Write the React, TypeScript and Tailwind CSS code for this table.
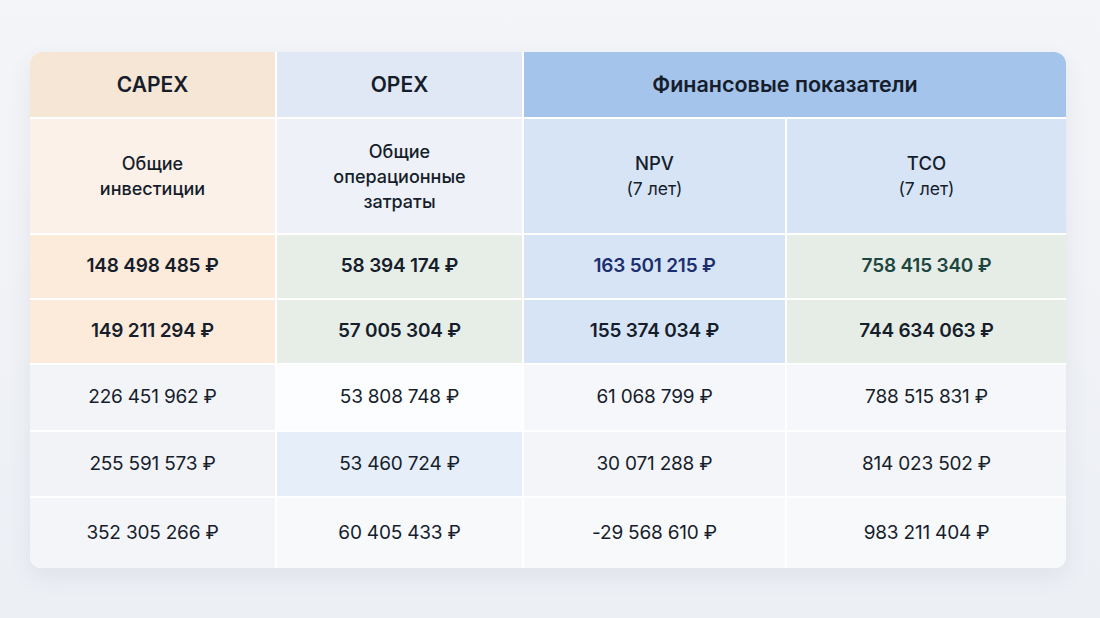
import React from 'react';

type Cell = { text: string; bg: string; tone?: string; bold?: boolean };

const rows: { h: string; cells: Cell[] }[] = [
  {
    h: 'h-[63px]',
    cells: [
      { text: '148 498 485 ₽', bg: 'bg-[#fcebdb]', bold: true },
      { text: '58 394 174 ₽', bg: 'bg-[#e7eee7]', bold: true },
      { text: '163 501 215 ₽', bg: 'bg-[#d7e4f6]', bold: true, tone: 'text-[#1b2f6e]' },
      { text: '758 415 340 ₽', bg: 'bg-[#e6ede6]', bold: true, tone: 'text-[#1d4640]' },
    ],
  },
  {
    h: 'h-[63px]',
    cells: [
      { text: '149 211 294 ₽', bg: 'bg-[#fcebdb]', bold: true },
      { text: '57 005 304 ₽', bg: 'bg-[#e7eee7]', bold: true },
      { text: '155 374 034 ₽', bg: 'bg-[#d7e4f6]', bold: true },
      { text: '744 634 063 ₽', bg: 'bg-[#e6ede6]', bold: true },
    ],
  },
  {
    h: 'h-[65px]',
    cells: [
      { text: '226 451 962 ₽', bg: 'bg-[#f2f4f8]' },
      { text: '53 808 748 ₽', bg: 'bg-[#fcfdfe]' },
      { text: '61 068 799 ₽', bg: 'bg-[#f6f7fa]' },
      { text: '788 515 831 ₽', bg: 'bg-[#f6f7fa]' },
    ],
  },
  {
    h: 'h-[64px]',
    cells: [
      { text: '255 591 573 ₽', bg: 'bg-[#f1f3f7]' },
      { text: '53 460 724 ₽', bg: 'bg-[#e6eef9]' },
      { text: '30 071 288 ₽', bg: 'bg-[#f4f5f8]' },
      { text: '814 023 502 ₽', bg: 'bg-[#f4f5f8]' },
    ],
  },
  {
    h: 'h-[70px]',
    cells: [
      { text: '352 305 266 ₽', bg: 'bg-[#f4f5f8]' },
      { text: '60 405 433 ₽', bg: 'bg-[#f8f9fb]' },
      { text: '-29 568 610 ₽', bg: 'bg-[#f8f9fb]' },
      { text: '983 211 404 ₽', bg: 'bg-[#f8f9fb]' },
    ],
  },
];

export default function App() {
  return (
    <div className="h-[618px] w-[1100px] overflow-hidden bg-gradient-to-b from-[#f4f5f8] to-[#eceff4] pl-[30px] pt-[52px] font-['Inter',sans-serif] text-[#161d2b]">
      <div className="w-[1036px] overflow-hidden rounded-[12px] bg-white shadow-[0_8px_24px_rgba(60,80,120,0.08)]">
        <div className="grid grid-cols-[245px_245px_261px_279px] gap-[2px] bg-white">
          {/* header */}
          <div className="flex h-[65px] items-center justify-center bg-[#f6e6d6] text-[21px] font-semibold">CAPEX</div>
          <div className="flex h-[65px] items-center justify-center bg-[#e1e8f5] text-[21px] font-semibold">OPEX</div>
          <div className="col-span-2 flex h-[65px] items-center justify-center bg-[#a4c4eb] pr-[20px] text-[21.5px] font-semibold">
            Финансовые показатели
          </div>

          {/* sub header */}
          <div className="flex h-[114px] items-center justify-center bg-[#fbf1e9] text-center text-[18px] font-medium leading-[25px]">
            Общие<br />инвестиции
          </div>
          <div className="flex h-[114px] items-center justify-center bg-[#eef2f8] text-center text-[18px] font-medium leading-[25px]">
            Общие<br />операционные<br />затраты
          </div>
          <div className="flex h-[114px] flex-col items-center justify-center bg-[#d7e4f6] text-center leading-[25px]">
            <span className="text-[18.5px] font-medium">NPV</span>
            <span className="text-[17.5px]">(7 лет)</span>
          </div>
          <div className="flex h-[114px] flex-col items-center justify-center bg-[#d7e4f6] text-center leading-[25px]">
            <span className="text-[18.5px] font-medium">TCO</span>
            <span className="text-[17.5px]">(7 лет)</span>
          </div>

          {rows.map((row, i) =>
            row.cells.map((c, j) => (
              <div
                key={`${i}-${j}`}
                className={`flex ${row.h} items-center justify-center ${c.bg} text-[19px] tracking-[-0.2px] ${c.bold ? 'font-semibold' : 'font-normal'} ${c.tone ?? 'text-[#161d2b]'}`}
              >
                {c.text}
              </div>
            ))
          )}
        </div>
      </div>
    </div>
  );
}
